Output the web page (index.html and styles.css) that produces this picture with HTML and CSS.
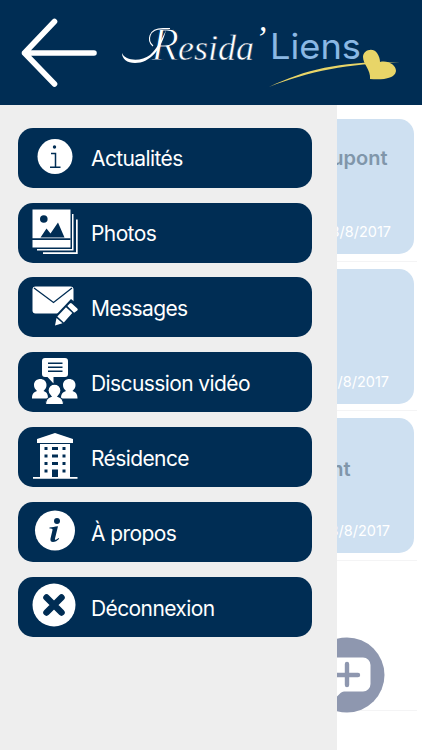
FILE: index.html
```html
<!DOCTYPE html>
<html lang="fr">
<head>
<meta charset="utf-8">
<meta name="viewport" content="width=device-width, initial-scale=1">
<title>Resida' Liens</title>
<link rel="stylesheet" href="styles.css">
</head>
<body>
<header class="header">
  <svg class="back" viewBox="0 0 80 72" aria-label="Retour"><path d="M36.500 4.500 6.500 36l30 31M6.500 36H76" fill="none" stroke="#fff" stroke-width="5.6" stroke-linecap="round" stroke-linejoin="round"/></svg>
  <svg class="logo" viewBox="120 20 282 70">
    <text class="logo-script" y="60"><tspan class="initial" x="151">R</tspan><tspan x="178">esida</tspan></text>
    <path d="M122 53C125 61 141 62 150 55C157 49 162 39 166 30C161 50 150 63 135 63C127 63 122 59 122 53Z" fill="#fff"/>
    <path d="M153 46C147 41 148 28.500 163 28.500H170" fill="none" stroke="#fff" stroke-width="1.1"/>
    <text class="logo-script mark" x="255" y="49">’</text>
    <text class="logo-sans" x="270" y="59" textLength="91" lengthAdjust="spacingAndGlyphs">Liens</text>
    <path d="M269 87C307 68 346 61 400 62C348 64 309 71 269 87Z" fill="#e8d568"/>
    <path d="M370 79C371 70 363 64 363 57C363 50 373 47 377 53C379 56 380 59 380 62C388 60 396 65 396 71C395 79 382 80 370 79Z" fill="#e8d568"/>
  </svg>
</header>
<div class="body">
  <main class="list">
    <article class="row"><div class="card"><h2 class="name">Dupont</h2><time class="date d1">8/8/2017</time></div></article>
    <article class="row"><div class="card"><time class="date d2">8/8/2017</time></div></article>
    <article class="row"><div class="card"><h2 class="name short">Dupont</h2><time class="date d3">8/8/2017</time></div></article>
    <div class="row last">
      <svg class="add" viewBox="0 0 76 76" aria-label="Ajouter"><circle cx="38" cy="38" r="37.5" fill="#8e97af"/><path d="M15 20.500h39a7.500 7.500 0 0 1 7.500 7.500v19a7.500 7.500 0 0 1-7.500 7.500H35q-2 0-3.500 1.500l-6 6v-7.500H15a7 7 0 0 1-7-7V28a7.500 7.500 0 0 1 7-7.500Z" fill="#fff"/><path d="M38 27v21M27 38h22" stroke="#8e97af" stroke-width="4.400" stroke-linecap="round"/></svg>
    </div>
  </main>
  <nav class="drawer">
    <a class="item"><svg class="icon" viewBox="0 0 48 48"><circle cx="24" cy="22.500" r="17.500" fill="#fff"/><circle cx="23.500" cy="13" r="1.700" fill="#002d54"/><path d="M20 19.500h4.500V33M19 33.300h10.500" fill="none" stroke="#002d54" stroke-width="1.500"/></svg><span class="label">Actualités</span></a>
    <a class="item"><svg class="icon" viewBox="0 0 48 48"><path fill="#fff" d="M1.500 .5h38v38h-38ZM41 5h1.500v36.500H6V40h35ZM45 10.500h1.700V45H12v-1.700h33Z"/><circle cx="12.800" cy="10" r="3.800" fill="#002d54"/><path d="m9.500 28.500 6-9 4 5 7.500-11 6.500 15ZM1 29.300h38.500v1.700H1Z" fill="#002d54"/></svg><span class="label">Photos</span></a>
    <a class="item"><svg class="icon" viewBox="0 0 48 48"><rect x="1.500" y="3.500" width="41" height="27" rx="3" fill="#fff"/><path d="m3 5 19.500 14.500L41 5" fill="none" stroke="#002d54" stroke-width="1.300"/><path d="m22 44 2-11 16-17 9 7-17 18Z" fill="#002d54"/><path d="m24 42.500 1.500-7.500 6 5.300ZM26.300 33.600l8.700-9.400 6.300 5.800-8.500 9.400ZM36.300 23l2.500-2.500q1-1 2 0l5.500 5q1 1 0 2l-3.200 2.200Z" fill="#fff"/></svg><span class="label">Messages</span></a>
    <a class="item"><svg class="icon" viewBox="0 0 48 48"><path fill="#fff" d="M14 0h20q3 0 3 3v13q0 3-3 3H22.500v6.500l-6-6.500H14q-3 0-3-3V3q0-3 3-3Z"/><path d="M17 5.300h14.500M17 9.300h14.500M17 13.300h14.500" stroke="#002d54" stroke-width="1.500"/><g fill="#fff"><path d="M1 40.500c0-5 2-6.500 5-7.500-2-2-3-3.500-3-6 0-8 12.500-8 12.500 0 0 2.500-1 4-3 6 3 1 4.500 2.500 4.500 7.500Z"/><path d="M30 40.500c0-5 2-6.500 5-7.500-2-2-3-3.500-3-6 0-8 12.500-8 12.500 0 0 2.500-1 4-3 6 3 1 5 2.500 5 7.500Z"/><path d="M14.500 46.500c0-5 2-7 5.500-8-2-2-3-3.500-3-6 0-8.500 13-8.500 13 0 0 2.500-1 4-3 6 3.500 1 5.500 3 5.500 8Z" stroke="#002d54" stroke-width="1.200"/></g></svg><span class="label">Discussion vidéo</span></a>
    <a class="item"><svg class="icon" viewBox="0 0 48 48"><path fill="#fff" d="m24 0 18 6v4H6V6ZM9 11h30v33h7.500v1.800H2V44h7Z"/><path d="M13.500 14h3v3h-3ZM21 14h6v3h-6ZM31.500 14h3v3h-3ZM13.500 21.500h3v3h-3ZM21 21.500h6v3h-6ZM31.500 21.500h3v3h-3ZM13.500 29h3v3h-3ZM21 29h6v3h-6ZM31.500 29h3v3h-3ZM13.500 36.500h3v3h-3ZM31.500 36.500h3v3h-3ZM21 36.500h6V44h-6Z" fill="#002d54"/></svg><span class="label">Résidence</span></a>
    <a class="item"><svg class="icon" viewBox="0 0 48 48"><circle cx="24" cy="22.500" r="20" fill="#fff"/><circle cx="26" cy="13" r="3" fill="#002d54"/><path d="M18.500 19.500c3-.3 5-.8 8.500-1.200l-3 12.200c-.5 2.500 1.500 1 3.500-.5l.7.8c-3.200 3.800-9.800 5-8.700-.3l2-8.500c.3-1-.5-1.500-3-1.500Z" fill="#002d54"/></svg><span class="label">À propos</span></a>
    <a class="item"><svg class="icon" viewBox="0 0 48 48"><circle cx="23" cy="22" r="21.500" fill="#fff"/><path d="m15.500 14.500 15 15m0-15-15 15" stroke="#002d54" stroke-width="6.500" stroke-linecap="round"/></svg><span class="label">Déconnexion</span></a>
  </nav>
</div>
</body>
</html>
```
FILE: styles.css
```css
* { box-sizing: border-box; }
body { margin: 0; width: 422px; height: 750px; overflow: hidden; background: #fff; font-family: Inter, "Liberation Sans", sans-serif; }
.header { display: flex; height: 105px; padding: 17px 0 0 18px; background: #002d54; }
.back { width: 80px; height: 72px; margin-right: 22px; }
.logo { width: 282px; height: 70px; margin-top: 3px; }
.logo-script { font-family: "Liberation Serif", serif; font-style: italic; font-size: 36px; fill: #fff; stroke: #002d54; stroke-width: 0.500px; }
.initial { font-size: 46px; stroke-width: 1.200px; }
.mark { font-size: 34px; stroke: none; }
.logo-sans { font-family: Inter, sans-serif; font-weight: 400; font-size: 35px; fill: #8bb8e4; }
.body { display: grid; grid-template-columns: 337px 85px; height: 645px; }
.drawer { grid-area: 1 / 1; display: flex; flex-direction: column; gap: 14.950px; padding: 22.600px 25px 0 17.500px; background: #eee; }
.item { display: flex; align-items: center; flex: none; height: 60px; padding-left: 13px; border-radius: 15px; background: #002d54; color: #fff; font-size: 21px; letter-spacing: -0.600px; white-space: nowrap; }
.label { padding-top: 2px; }
.icon { width: 48px; height: 48px; margin-right: 12.500px; }
.list { grid-area: 1 / 2; min-width: 0; overflow: hidden; }
.row { height: 149.800px; width: 80px; padding-top: 14px; border-bottom: 1px solid #f4f4f5; display: flex; flex-direction: column; }
.row:first-child { height: 156.500px; }
.card { width: 76.500px; height: 135px; flex: none; border-radius: 0 15px 15px 0; background: #cee0f1; display: flex; flex-direction: column; align-items: flex-end; padding: 25px 26px 0 0; overflow: hidden; }
.row:not(:first-child) { padding-top: 7px; }
.name { margin: 0; font-size: 20px; line-height: 28px; font-weight: 600; color: #8096aa; }
.short { margin: 12px 37px 0 0; }
.date { margin-top: auto; margin-bottom: 12px; font-size: 14.500px; line-height: 20px; color: #fff; white-space: nowrap; }
.d1 { margin-right: -3.500px; }
.d2 { margin-right: -1.500px; }
.d3 { margin-right: -2.500px; }
.last { align-items: flex-end; }
.add { width: 76px; height: 76px; flex: none; margin: 69px 32.500px 0 0; }
```
